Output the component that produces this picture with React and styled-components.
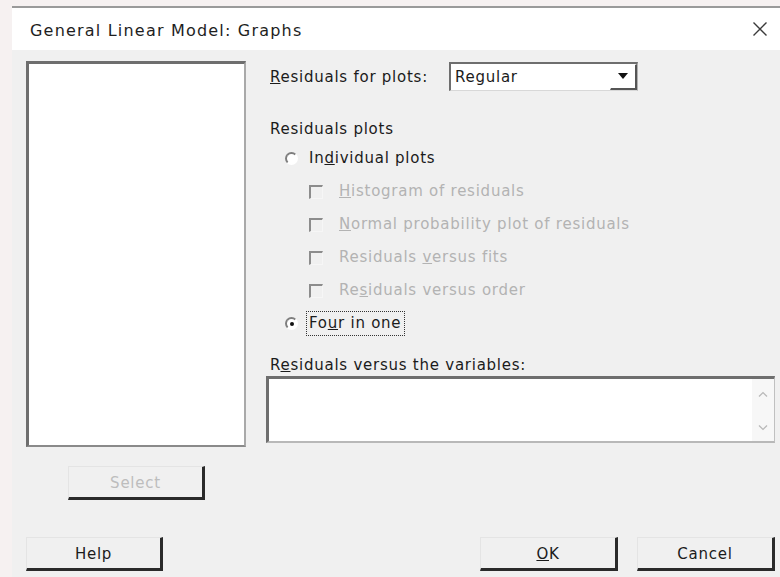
import React from "react";
import styled, { createGlobalStyle } from "styled-components";

const Global = createGlobalStyle`
  html, body { margin: 0; padding: 0; }
  body {
    background: #f6f1f1;
    font-family: "DejaVu Sans", "Open Sans", "Liberation Sans", sans-serif;
    font-size: 15px;
    letter-spacing: 0.75px;
    color: #1b1b1b;
  }
`;

export default function App() {
  return (
    <>
      <Global />
      <Window>
        <TitleBar>
          <Title>General Linear Model: Graphs</Title>
          <CloseBtn>
            <svg width="16" height="16" viewBox="0 0 16 16">
              <path d="M1.5 1.5 L14.5 14.5 M14.5 1.5 L1.5 14.5" stroke="#3a3a3a" strokeWidth="1.4" fill="none" />
            </svg>
          </CloseBtn>
        </TitleBar>
        <Body>
          <Main>
            <LeftCol>
              <ListBox />
              <SelectRow>
                <Button $disabled $w={137}>Select</Button>
              </SelectRow>
            </LeftCol>
            <RightCol>
              <TopRow>
                <Label><u>R</u>esiduals for plots:</Label>
                <Combo>
                  <ComboText>Regular</ComboText>
                  <ComboArrow>
                    <svg width="10" height="6" viewBox="0 0 10 6">
                      <path d="M0 0 L10 0 L5 6 Z" fill="#111" />
                    </svg>
                  </ComboArrow>
                </Combo>
              </TopRow>
              <Heading>Residuals plots</Heading>
              <OptionRow $indent={17}>
                <Radio />
                <OptionText>In<u>d</u>ividual plots</OptionText>
              </OptionRow>
              <OptionRow $indent={41}>
                <Check />
                <OptionText $disabled><u>H</u>istogram of residuals</OptionText>
              </OptionRow>
              <OptionRow $indent={41}>
                <Check />
                <OptionText $disabled><u>N</u>ormal probability plot of residuals</OptionText>
              </OptionRow>
              <OptionRow $indent={41}>
                <Check />
                <OptionText $disabled>Residuals <u>v</u>ersus fits</OptionText>
              </OptionRow>
              <OptionRow $indent={41}>
                <Check />
                <OptionText $disabled>Re<u>s</u>iduals versus order</OptionText>
              </OptionRow>
              <OptionRow $indent={17}>
                <Radio $checked />
                <OptionText $focused>Fo<u>u</u>r in one</OptionText>
              </OptionRow>
              <VarLabel>R<u>e</u>siduals versus the variables:</VarLabel>
              <VarBox>
                <Scroller>
                  <svg width="10" height="6" viewBox="0 0 10 6">
                    <path d="M1 5.5 L5 1.5 L9 5.5" stroke="#b8b8b8" strokeWidth="1.2" fill="none" />
                  </svg>
                  <svg width="10" height="6" viewBox="0 0 10 6">
                    <path d="M1 0.5 L5 4.5 L9 0.5" stroke="#b8b8b8" strokeWidth="1.2" fill="none" />
                  </svg>
                </Scroller>
              </VarBox>
            </RightCol>
          </Main>
          <BottomRow>
            <Button $w={137}>Help</Button>
            <RightButtons>
              <Button $w={138}><u>O</u>K</Button>
              <Button $w={138}>Cancel</Button>
            </RightButtons>
          </BottomRow>
        </Body>
      </Window>
    </>
  );
}

const Window = styled.div`
  margin: 6px 0 0 12px;
  width: 768px;
  height: 571px;
  border-top: 2px solid #9a9a9a;
  display: flex;
  flex-direction: column;
`;

const TitleBar = styled.div`
  height: 42px;
  background: #ffffff;
  display: flex;
  align-items: center;
  justify-content: space-between;
  padding: 0 11px 0 18px;
`;

const Title = styled.div`
  font-size: 16px;
  letter-spacing: 1.2px;
  color: #1e1e1e;
  margin-top: 2px;
`;

const CloseBtn = styled.div`
  width: 18px;
  height: 18px;
  display: flex;
  align-items: center;
  justify-content: center;
`;

const Body = styled.div`
  flex: 1;
  background: #f0f0f0;
  padding: 11px 0 0 14px;
  display: flex;
  flex-direction: column;
`;

const Main = styled.div`
  display: flex;
`;

const LeftCol = styled.div`
  width: 220px;
  display: flex;
  flex-direction: column;
`;

const ListBox = styled.div`
  height: 386px;
  box-sizing: border-box;
  background: #fff;
  border-style: solid;
  border-width: 3px 2px 2px 3px;
  border-color: #6e6e6e #a9a9a9 #8a8a8a #6e6e6e;
`;

const SelectRow = styled.div`
  padding: 19px 0 0 42px;
`;

const Button = styled.div`
  width: ${(p) => p.$w}px;
  height: 34px;
  box-sizing: border-box;
  display: flex;
  align-items: center;
  justify-content: center;
  background: #f0f0f0;
  border-style: solid;
  border-width: 1px 3px 3px 1px;
  border-color: #e4e4e4 #2a2a2a #2a2a2a #e4e4e4;
  color: ${(p) => (p.$disabled ? "#bdbdbd" : "#1b1b1b")};
  padding-top: 2px;
`;

const RightCol = styled.div`
  margin-left: 22px;
  flex: 1;
  display: flex;
  flex-direction: column;
  padding-top: 1px;
`;

const TopRow = styled.div`
  display: flex;
  align-items: center;
  height: 29px;
`;

const Label = styled.div`
  width: 179px;
  padding-left: 2px;
`;

const Combo = styled.div`
  width: 189px;
  height: 29px;
  box-sizing: border-box;
  background: #fff;
  display: flex;
  align-items: center;
  justify-content: space-between;
  border-style: solid;
  border-width: 2px 1px 1px 2px;
  border-color: #6e6e6e #b0b0b0 #d8d8d8 #6e6e6e;
`;

const ComboText = styled.div`
  padding-left: 4px;
`;

const ComboArrow = styled.div`
  width: 27px;
  height: 26px;
  box-sizing: border-box;
  display: flex;
  align-items: center;
  justify-content: center;
  border-style: solid;
  border-width: 1px 2px 2px 1px;
  border-color: #ffffff #555 #555 #ffffff;
  padding-bottom: 2px;
`;

const Heading = styled.div`
  margin-top: 25px;
  height: 26px;
  line-height: 26px;
  padding-left: 2px;
`;

const OptionRow = styled.div`
  height: 33px;
  display: flex;
  align-items: center;
  padding-left: ${(p) => p.$indent}px;
`;

const Radio = styled.div`
  width: 13px;
  height: 13px;
  box-sizing: border-box;
  border-radius: 50%;
  border-style: solid;
  border-width: 2px;
  border-color: #7e7e7e #ffffff #ffffff #7e7e7e;
  background: #fff;
  margin-right: 11px;
  position: relative;
  &::after {
    content: "";
    display: ${(p) => (p.$checked ? "block" : "none")};
    position: absolute;
    left: 2.5px;
    top: 2.5px;
    width: 4px;
    height: 4px;
    border-radius: 50%;
    background: #111;
  }
`;

const Check = styled.div`
  width: 14px;
  height: 14px;
  box-sizing: border-box;
  border-style: solid;
  border-width: 2px 1px 1px 2px;
  border-color: #8c8c8c #f6f6f6 #f6f6f6 #8c8c8c;
  background: #f0f0f0;
  margin-right: 16px;
`;

const OptionText = styled.div`
  color: ${(p) => (p.$disabled ? "#b3b3b3" : "#1b1b1b")};
  border: 1px dotted ${(p) => (p.$focused ? "#333" : "transparent")};
  padding: 2px 3px 3px 2px;
  margin-left: -3px;
`;

const VarLabel = styled.div`
  margin-top: 15px;
  height: 21px;
  line-height: 20px;
  padding-left: 2px;
`;

const VarBox = styled.div`
  width: 509px;
  height: 67px;
  margin-left: -2px;
  box-sizing: border-box;
  background: #fff;
  display: flex;
  justify-content: flex-end;
  border-style: solid;
  border-width: 3px 1px 2px 3px;
  border-color: #6e6e6e #c0c0c0 #b8b8b8 #6e6e6e;
`;

const Scroller = styled.div`
  width: 22px;
  background: #f7f7f7;
  display: flex;
  flex-direction: column;
  justify-content: space-between;
  align-items: center;
  padding: 12px 0 10px;
  box-sizing: border-box;
`;

const BottomRow = styled.div`
  margin-top: 37px;
  display: flex;
  justify-content: space-between;
  padding-right: 5px;
`;

const RightButtons = styled.div`
  display: flex;
  gap: 19px;
`;
